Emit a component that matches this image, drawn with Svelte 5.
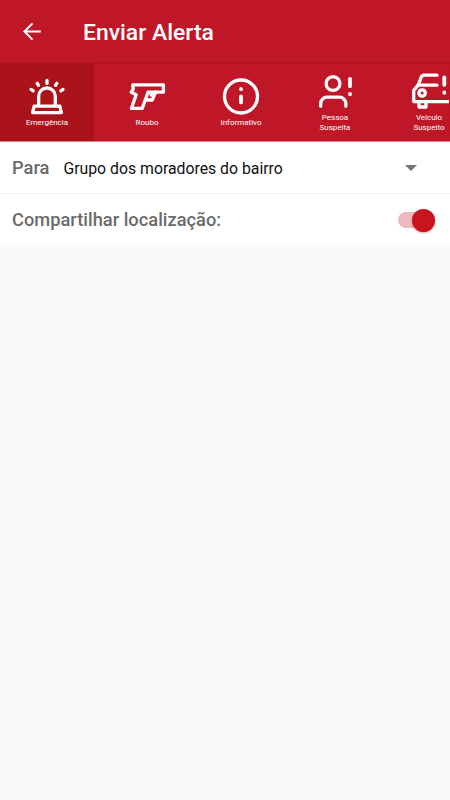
<script>
  let selected = $state(0);
  let shareLocation = $state(true);

  const tabs = [
    { icon: 'siren', lines: ['Emergência'] },
    { icon: 'gun', lines: ['Roubo'] },
    { icon: 'info', lines: ['Informativo'] },
    { icon: 'person', lines: ['Pessoa', 'Suspeita'] },
    { icon: 'car', lines: ['Veículo', 'Suspeito'] }
  ];
</script>

<div class="screen">
  <header class="toolbar">
    <button class="back" aria-label="Voltar">
      <svg width="20" height="20" viewBox="0 0 20 20">
        <path d="M18.8 9.5H2.5M10.5 1.4L2.4 9.5L10.5 17.6" />
      </svg>
    </button>
    <h1>Enviar Alerta</h1>
  </header>

  <nav class="tabs">
    {#each tabs as tab, i}
      <button class="tab" class:selected={selected === i} onclick={() => (selected = i)}>
        <svg class="icon" width="40" height="40" viewBox="0 0 40 40">
          {#if tab.icon === 'siren'}
            <path d="M11.7 28V19.3a8.3 8.3 0 0 1 16.6 0V28" />
            <path d="M7.2 29.2H32.8L34.4 35.6H5.6Z" />
            <path d="M20 3.4V6.4M10.2 6.3L11.5 8.3M29.8 6.3L28.5 8.3M4 12.4L6.2 13.9M36 12.4L33.8 13.9" />
          {:else if tab.icon === 'gun'}
            <path d="M5.8 7.8H36.4V15.2H28.6L25.2 23H18.3L15.2 31.4H4.4L9.2 17.8L4.2 15.2L6.2 12.4Z" />
            <path d="M18.3 23L21 15.2H28.6M24.2 15.6V18.2" />
          {:else if tab.icon === 'info'}
            <circle cx="20" cy="19.5" r="16.5" />
            <path class="thick" d="M20 11.9V12.2M20 19.4V25.4" />
          {:else if tab.icon === 'person'}
            <circle cx="18" cy="11.5" r="6.9" />
            <path d="M5.7 34.2V31.5a6.3 6.3 0 0 1 6.3 -6.3H24.5a6.3 6.3 0 0 1 6.3 6.3V34.2" />
            <path class="thick" d="M35 6.8V14.2M35 21.9V22.2" />
          {:else}
            <path d="M28 3.2H14.2L12.4 4.6L9.2 13.2H28" />
            <path d="M9.2 13.2L4.7 18.4V29.6H40" />
            <circle cx="13.1" cy="21" r="3.2" />
            <path d="M10 29.6V35H17V29.6" />
            <path class="thick" d="M35.3 5.3V12.8M35.3 20.5V20.8" />
          {/if}
        </svg>
        {#each tab.lines as line}
          <span>{line}</span>
        {/each}
      </button>
    {/each}
  </nav>

  <section class="row recipient">
    <span class="label">Para</span>
    <span class="value">Grupo dos moradores do bairro</span>
    <svg class="caret" width="12" height="6" viewBox="0 0 12 6">
      <path d="M0 0H12L6 6Z" />
    </svg>
  </section>

  <section class="row share">
    <span class="label">Compartilhar localização:</span>
    <button
      class="switch"
      class:on={shareLocation}
      role="switch"
      aria-checked={shareLocation}
      aria-label="Compartilhar localização"
      onclick={() => (shareLocation = !shareLocation)}
    >
      <span class="thumb"></span>
    </button>
  </section>
</div>

<style>
:global(body) {
  background: #fafafa;
}
.screen {
  width: 450px;
  height: 800px;
  overflow: hidden;
  background: #fafafa;
  font-family: Roboto, "Liberation Sans", sans-serif;
}
button {
  border: none;
  padding: 0;
  background: none;
  font-family: inherit;
  cursor: pointer;
}
.toolbar {
  display: flex;
  align-items: center;
  height: 63px;
  padding-left: 22px;
  box-sizing: border-box;
  background: #c01728;
}
.back {
  display: flex;
  width: 20px;
  height: 20px;
  margin-right: 41px;
}
.back path {
  fill: none;
  stroke: #fff;
  stroke-width: 2;
}
h1 {
  margin: 2px 0 0;
  color: #fff;
  font-size: 22.9px;
  font-weight: 500;
  line-height: 30px;
  white-space: nowrap;
}
.tabs {
  display: flex;
  height: 78px;
  overflow: hidden;
  background: #c01728;
  border-bottom: 1px solid #d9848b;
  box-shadow: inset 0 1px 1px #ac1421;
}
.tab {
  display: flex;
  flex: 0 0 94px;
  flex-direction: column;
  align-items: center;
  justify-content: center;
  color: #fff;
}
.tab:first-child {
  margin-right: 6px;
}
.tab.selected {
  background: #a91319;
}
.tab span {
  font-size: 8px;
  line-height: 9.5px;
}
.icon {
  flex: none;
  margin-bottom: 1px;
  fill: none;
  stroke: #fff;
  stroke-width: 3.3;
  stroke-linecap: round;
  stroke-linejoin: round;
}
.icon .thick {
  stroke-width: 3.8;
}
.row {
  display: flex;
  align-items: center;
  box-sizing: border-box;
  padding-left: 12px;
  background: #fff;
}
.label {
  color: #6b6b6b;
  font-size: 18.3px;
  font-weight: 500;
  white-space: nowrap;
}
.recipient {
  height: 52px;
  padding-right: 33px;
  border-bottom: 1px solid #f3f3f3;
}
.value {
  flex: 1;
  margin-left: 14px;
  padding-top: 2px;
  color: #111;
  font-size: 15.8px;
  white-space: nowrap;
}
.caret {
  fill: #757575;
}
.share {
  justify-content: space-between;
  height: 50px;
  padding-top: 2px;
  padding-right: 15px;
}
.share .label {
  padding-bottom: 2px;
}
.switch {
  display: flex;
  align-items: center;
  width: 37px;
  height: 16px;
  border-radius: 8px;
  background: #c4c4c4;
}
.switch.on {
  justify-content: flex-end;
  background: #f0b9bf;
}
.thumb {
  width: 23px;
  height: 23px;
  flex: none;
  border-radius: 50%;
  background: #fff;
  box-shadow: 0 1px 2px rgba(190, 20, 30, 0.35);
}
.on .thumb {
  background: #c8151d;
}
</style>
